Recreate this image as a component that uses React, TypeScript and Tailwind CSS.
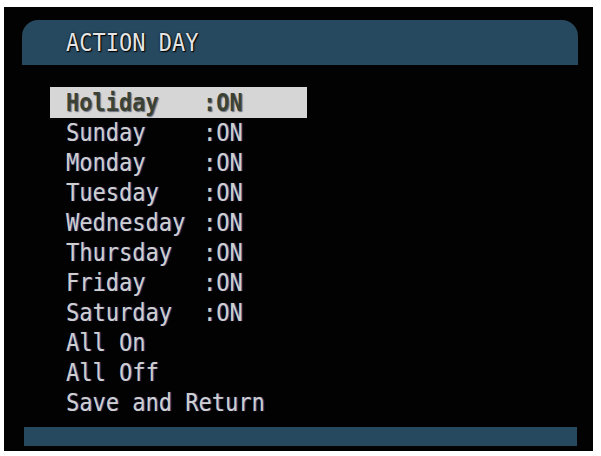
import { type FC } from 'react';

const rows = [
  { label: 'Holiday', value: ':ON', active: true },
  { label: 'Sunday', value: ':ON' },
  { label: 'Monday', value: ':ON' },
  { label: 'Tuesday', value: ':ON' },
  { label: 'Wednesday', value: ':ON' },
  { label: 'Thursday', value: ':ON' },
  { label: 'Friday', value: ':ON' },
  { label: 'Saturday', value: ':ON' },
  { label: 'All On' },
  { label: 'All Off' },
  { label: 'Save and Return' },
];

const MenuRow: FC<{ label: string; value?: string; active?: boolean }> = ({ label, value, active }) => (
  <div
    className={
      active
        ? 'h-[31px] w-[257px] flex items-center pl-[16px] bg-[#d6d6d6] text-[#3b4133] font-bold [text-shadow:1px_1px_1px_#6a6f80]'
        : 'h-[30px] flex items-center pl-[16px] text-[#cfcfcf] [text-shadow:1px_0_1px_#5a4c7a]'
    }
  >
    <span className="w-[137px] whitespace-pre inline-block scale-y-[1.12]">{label}</span>
    {value && <span className="inline-block scale-y-[1.12]">{value}</span>}
  </div>
);

export default function App() {
  return (
    <div className="w-[601px] h-[456px] bg-white pt-[7px] pl-[4px] font-['DejaVu_Sans_Mono',monospace] text-[22px] leading-none">
      <div className="w-[589px] h-[444px] bg-[#020202] flex flex-col">
        {/* Title bar */}
        <div className="ml-[18px] mt-[13px] w-[556px] h-[45px] rounded-t-[16px] bg-[#27495f] flex items-center pl-[44px]">
          <span className="inline-block scale-y-[1.12] text-[#e4e4e4] [text-shadow:0_0_2px_#000,1px_1px_1px_#000]">ACTION DAY</span>
        </div>

        {/* Menu */}
        <div className="ml-[46px] mt-[22px] flex flex-col">
          {rows.map((r) => (
            <MenuRow key={r.label} {...r} />
          ))}
        </div>

        {/* Bottom bar */}
        <div className="ml-[20px] mt-[9px] w-[553px] h-[19px] bg-[#27495f]" />
      </div>
    </div>
  );
}
